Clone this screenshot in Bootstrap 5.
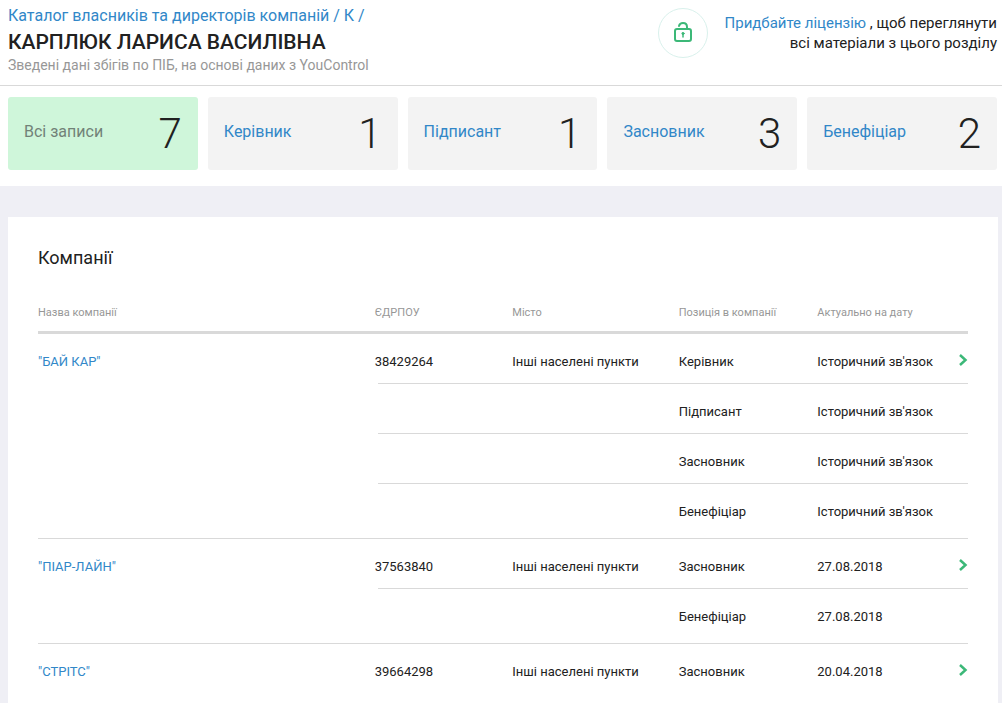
<!DOCTYPE html>
<html lang="uk">
<head>
<meta charset="utf-8">
<meta name="viewport" content="width=device-width, initial-scale=1">
<title>КАРПЛЮК ЛАРИСА ВАСИЛІВНА</title>
<link href="https://cdn.jsdelivr.net/npm/bootstrap@5.3.0/dist/css/bootstrap.min.css" rel="stylesheet">
<style>
  body { font-family: Roboto, "Noto Sans", sans-serif; color: #212121; background: #efeff5; font-size: 16px; line-height: 20px; }
  a { color: #3187c8; text-decoration: none; }
  a:hover { text-decoration: underline; }
  .page-head { padding: 6px 5px 13px 8px; border-bottom: 1px solid #d9d9d9; }
  .page-title { font-size: 21px; line-height: 32px; font-weight: 500; }
  .page-note { font-size: 14px; line-height: 14px; color: #979797; }
  .licence { font-size: 15px; gap: 15px; padding-top: 2px; }
  .licence p { padding-top: 5px; width: 274px; }
  .lock-ring { width: 50px; height: 50px; border: 1px solid #d9f1ec; border-radius: 50%; }
  .stats { gap: 10px; padding: 11px 5px 16px 8px; }
  .stat { flex: 1 1 0; min-width: 160px; height: 73px; padding: 0 16px; background: #f3f3f3; border-radius: 3px; }
  .stat.active { background: #cff6da; color: #728278; }
  .stat-label { padding-bottom: 4px; }
  .stat-value { font-size: 42px; line-height: 72px; font-weight: 300; color: #212121; }
  .content-area { padding: 31px 4px 0 8px; }
  .panel { background: #fff; padding: 30px; }
  .panel h2 { font-size: 18px; line-height: 22px; font-weight: 400; margin-bottom: 34px; }
  .companies { table-layout: fixed; border-collapse: separate; border-spacing: 0; font-size: 13px; line-height: 20px; }
  .companies th, .companies td { padding: 0; vertical-align: top; text-align: left; }
  .companies th { font-size: 11px; font-weight: 400; color: #979797; padding-bottom: 8px; border-bottom: 3px solid #d9d9d9; }
  .companies td { padding: 18px 0 11px; border-bottom: 1px solid #d9d9d9; }
  .companies tr:not(.last) td.name { border-color: transparent; }
  /* the divider inside a company starts slightly right of the code column */
  .companies tr:not(.last) td.code { border-color: transparent; background: linear-gradient(#d9d9d9, #d9d9d9) 3px 100% / 100% 1px no-repeat border-box; }
  .companies tr.last td { padding-bottom: 16px; }
  .companies tbody:last-child td { border-bottom: 0; }
  .w-name { width: 36.2%; } .w-code { width: 14.8%; } .w-city { width: 17.9%; } .w-role { width: 14.9%; } .w-go { width: 14px; }
  .go { display: flex; justify-content: flex-end; padding-top: 2px; }
  @media (max-width: 767px) { .companies { min-width: 760px; } }
</style>
</head>
<body class="d-flex flex-column min-vh-100">
<header class="bg-white">
  <div class="page-head d-flex flex-wrap justify-content-between">
    <div>
      <nav><a href="#">Каталог власників та директорів компаній</a> <a href="#">/ К /</a></nav>
      <h1 class="page-title mb-0">КАРПЛЮК ЛАРИСА ВАСИЛІВНА</h1>
      <p class="page-note mb-0">Зведені дані збігів по ПІБ, на основі даних з YouControl</p>
    </div>
    <div class="licence d-flex">
      <span class="lock-ring d-flex align-items-center justify-content-center">
        <svg width="20" height="24" viewBox="0 0 20 24" fill="none" stroke="#3cb878" stroke-width="2" stroke-linecap="round" aria-hidden="true">
          <rect x="2" y="8" width="16" height="12" rx="2"/>
          <path d="M6 5C6.500 3 8 2 10 2C12.500 2 14 3.500 14 6V8"/>
          <path d="M10 13v3" stroke-width="1.500"/><circle cx="10" cy="12.500" r="1.100" fill="#3cb878" stroke-width="1"/>
        </svg>
      </span>
      <p class="mb-0 text-end"><a href="#">Придбайте ліцензію</a> , щоб переглянути всі матеріали з цього розділу</p>
    </div>
  </div>
  <div class="stats d-flex flex-wrap">
    <div class="stat active d-flex align-items-center justify-content-between"><span class="stat-label">Всі записи</span><span class="stat-value">7</span></div>
    <div class="stat d-flex align-items-center justify-content-between"><a class="stat-label" href="#">Керівник</a><span class="stat-value">1</span></div>
    <div class="stat d-flex align-items-center justify-content-between"><a class="stat-label" href="#">Підписант</a><span class="stat-value">1</span></div>
    <div class="stat d-flex align-items-center justify-content-between"><a class="stat-label" href="#">Засновник</a><span class="stat-value">3</span></div>
    <div class="stat d-flex align-items-center justify-content-between"><a class="stat-label" href="#">Бенефіціар</a><span class="stat-value">2</span></div>
  </div>
</header>
<main class="content-area flex-grow-1 d-flex flex-column">
  <section class="panel flex-grow-1 pb-0">
    <h2>Компанії</h2>
    <div class="table-responsive">
      <table class="companies w-100">
        <colgroup><col class="w-name"><col class="w-code"><col class="w-city"><col class="w-role"><col><col class="w-go"></colgroup>
        <thead>
          <tr><th scope="col">Назва компанії</th><th scope="col">ЄДРПОУ</th><th scope="col">Місто</th><th scope="col">Позиція в компанії</th><th scope="col">Актуально на дату</th><th></th></tr>
        </thead>
        <tbody>
          <tr><td class="name"><a href="#">"БАЙ КАР"</a></td><td class="code">38429264</td><td>Інші населені пункти</td><td>Керівник</td><td>Історичний зв'язок</td><td><a class="go" href="#" aria-label="БАЙ КАР"><svg width="10" height="12" viewBox="0 0 10 12" fill="none" stroke="#3cb878" stroke-width="2.500"><path d="M2 1l5.500 5L2 11"/></svg></a></td></tr>
          <tr><td class="name"></td><td class="code"></td><td></td><td>Підписант</td><td>Історичний зв'язок</td><td></td></tr>
          <tr><td class="name"></td><td class="code"></td><td></td><td>Засновник</td><td>Історичний зв'язок</td><td></td></tr>
          <tr class="last"><td class="name"></td><td class="code"></td><td></td><td>Бенефіціар</td><td>Історичний зв'язок</td><td></td></tr>
        </tbody>
        <tbody>
          <tr><td class="name"><a href="#">"ПІАР-ЛАЙН"</a></td><td class="code">37563840</td><td>Інші населені пункти</td><td>Засновник</td><td>27.08.2018</td><td><a class="go" href="#" aria-label="ПІАР-ЛАЙН"><svg width="10" height="12" viewBox="0 0 10 12" fill="none" stroke="#3cb878" stroke-width="2.500"><path d="M2 1l5.500 5L2 11"/></svg></a></td></tr>
          <tr class="last"><td class="name"></td><td class="code"></td><td></td><td>Бенефіціар</td><td>27.08.2018</td><td></td></tr>
        </tbody>
        <tbody>
          <tr class="last"><td class="name"><a href="#">"СТРІТС"</a></td><td class="code">39664298</td><td>Інші населені пункти</td><td>Засновник</td><td>20.04.2018</td><td><a class="go" href="#" aria-label="СТРІТС"><svg width="10" height="12" viewBox="0 0 10 12" fill="none" stroke="#3cb878" stroke-width="2.500"><path d="M2 1l5.500 5L2 11"/></svg></a></td></tr>
        </tbody>
      </table>
    </div>
  </section>
</main>
<script src="https://cdn.jsdelivr.net/npm/bootstrap@5.3.0/dist/js/bootstrap.bundle.min.js"></script>
</body>
</html>
